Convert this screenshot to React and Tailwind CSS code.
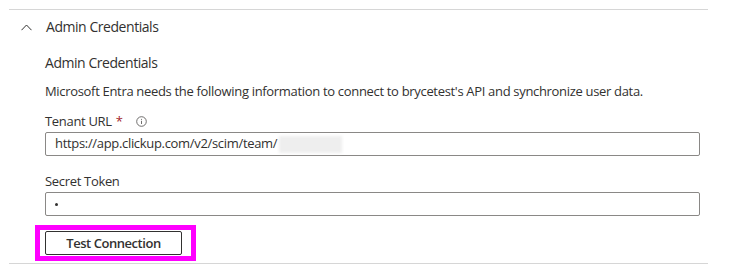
export default function App() {
  return (
    <div
      className="w-[750px] h-[268px] bg-white pt-[9px] pl-[9px] text-[#323130] tracking-[-0.32px]"
      style={{ fontFamily: '"Open Sans", "Noto Sans", sans-serif' }}
    >
      <div className="w-[699px] border-t border-[#d6d6d6]">
        <div className="flex items-center h-[34px]">
          <svg className="ml-[12px] w-[11px] h-[7px]" viewBox="0 0 11 7" fill="none">
            <path d="M0.5 6.2 L5.5 1 L10.5 6.2" stroke="#323130" strokeWidth="1" />
          </svg>
          <span className="ml-[14px] text-[14px] leading-[20px] tracking-[-0.45px]">Admin Credentials</span>
        </div>

        <div className="pl-[36px]">
          <div className="mt-[9px] text-[14px] leading-[20px] tracking-[-0.45px]">Admin Credentials</div>
          <div className="mt-[9px] text-[13px] leading-[18px]">
            Microsoft Entra needs the following information to connect to brycetest's API and synchronize user data.
          </div>

          <div className="mt-[12px] flex items-center text-[13px] leading-[18px]">
            <span>Tenant URL</span>
            <span className="ml-[4px] text-[#a4262c]">*</span>
            <svg className="ml-[13px] w-[11px] h-[11px]" viewBox="0 0 11 11" fill="none">
              <circle cx="5.5" cy="5.5" r="4.8" stroke="#605e5c" strokeWidth="0.9" />
              <path d="M5.5 4.8 V8" stroke="#605e5c" strokeWidth="0.9" />
              <circle cx="5.5" cy="3.2" r="0.55" fill="#605e5c" />
            </svg>
          </div>
          <div className="mt-[2px] w-[655px] h-[24px] border border-[#8a8886] rounded-[2px] flex items-center pl-[9px] text-[13px]">
            <span>https://app.clickup.com/v2/scim/team/</span>
            <span className="ml-[2px] w-[63px] h-[17px] bg-[#eeeeee] blur-[1.5px]" />
          </div>

          <div className="mt-[16px] text-[13px] leading-[18px]">Secret Token</div>
          <div className="mt-[2px] w-[655px] h-[24px] border border-[#8a8886] rounded-[2px] flex items-center pl-[9px]">
            <span className="w-[3px] h-[3px] rounded-full bg-[#323130]" />
          </div>

          <div className="mt-[9px] -ml-[10px] w-[161px] h-[36px] border-[5px] border-[#ff00ff] pl-[5px] pt-[1px]">
            <button className="w-[137px] h-[24px] border border-[#323130] rounded-[2px] bg-white text-[13px] font-semibold leading-[18px] tracking-[-0.45px] flex items-center justify-center">
              Test Connection
            </button>
          </div>
        </div>

        <div className="mt-[2px] border-t border-[#d6d6d6]" />
      </div>
    </div>
  );
}
